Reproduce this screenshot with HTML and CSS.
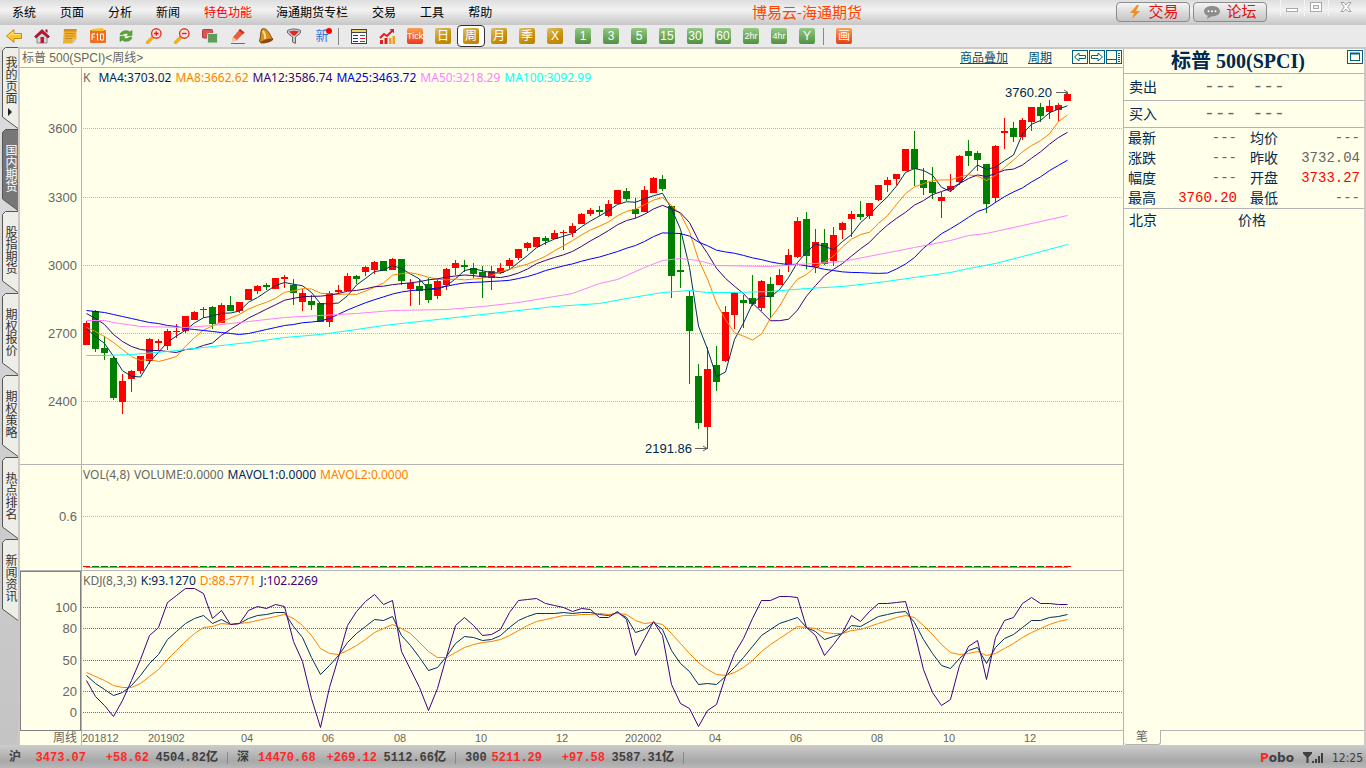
FILE: index.html
```html
<!DOCTYPE html>
<html lang="zh-CN">
<head>
<meta charset="utf-8">
<title>博易云-海通期货</title>
<link rel="stylesheet" href="styles.css">
</head>
<body>
<header class="titlebar">
  <nav class="menu">
    <button>系统</button><button>页面</button><button>分析</button><button>新闻</button><button class="hot">特色功能</button><button>海通期货专栏</button><button>交易</button><button>工具</button><button>帮助</button>
  </nav>
  <h1 class="app-title">博易云-海通期货</h1>
  <div class="actions">
    <button class="pill"><svg width="16" height="16" viewBox="0 0 16 16"><path d="M10 1L3 9h4L5 15l8-8H9l3-6z" fill="#f09020"/></svg>交易</button>
    <button class="pill"><svg width="18" height="16" viewBox="0 0 18 16"><path d="M9 2c4.500 0 8 2.200 8 5.300s-3.500 5.200-8 5.200l-1 0-4 2.500.8-3.200C2.500 11 1 9.300 1 7.300 1 4.200 4.500 2 9 2z" fill="#8c8c8c"/><g fill="#fff"><circle cx="5.500" cy="7.300" r="1"/><circle cx="9" cy="7.300" r="1"/><circle cx="12.500" cy="7.300" r="1"/></g></svg>论坛</button>
  </div>
  <div class="window-controls">
    <button aria-label="最小化"><svg width="14" height="14" viewBox="0 0 14 14"><rect x="1.500" y="8.500" width="11" height="3" fill="#fff" stroke="#a8a8a8"/></svg></button>
    <button aria-label="最大化"><svg width="14" height="14" viewBox="0 0 14 14"><rect x="1.500" y="2.500" width="11" height="9" fill="#fff" stroke="#a8a8a8"/><rect x="4.500" y="5.500" width="5" height="3" fill="#eee" stroke="#a8a8a8"/></svg></button>
    <button aria-label="关闭"><svg width="14" height="14" viewBox="0 0 14 14"><path d="M2 2.500h3l2 2.500 2-2.500h3L8.700 7l3.300 4.500H9L7 9l-2 2.500H2L5.300 7z" fill="#fff" stroke="#a0a0a0"/></svg></button>
  </div>
</header>

<div class="toolbar" role="toolbar">
  <button aria-label="后退"><svg viewBox="0 0 16 16"><path d="M0.500 8L8 1.500v4h7.500v5H8v4z" fill="#fcc52c" stroke="#c98a10"/><path d="M2.500 8L7 4v2.500h7.500" fill="none" stroke="#ffe888"/></svg></button>
  <button aria-label="主页"><svg viewBox="0 0 16 16"><path d="M3 7.500L8 3l5 4.500V15H3z" fill="#d8d8dc" stroke="#888"/><path d="M0.500 8.500L8 1.500l7.500 7-1.500 1.500L8 5l-6 5z" fill="#c8102a" stroke="#7c0818" stroke-width=".6"/><path d="M11.500 1.500h2v3.500l-2-1.500z" fill="#a01020"/><rect x="6.500" y="9" width="3.500" height="6" fill="#c0182c"/></svg></button>
  <button aria-label="便笺"><svg viewBox="0 0 16 16"><path d="M2 1h12.500v10l-4 4.500H1z" fill="#eeb030"/><path d="M2 1h12.500v2.500H1.800z" fill="#d49018"/><path d="M3 5.500h10M3 8h10M3 10.500h7" stroke="#c88c28"/><path d="M14.500 11l-4 4.500V11z" fill="#c8c8c0"/></svg></button>
  <button aria-label="F10资料"><svg viewBox="0 0 16 16"><rect x="0" y="2" width="16" height="13" rx="1" fill="#f07020"/><path d="M2 1l11-1 1 3H2z" fill="#f8c020"/><path d="M2 12V6h3M2 9h2.500M7.500 5.500V12.500M6.500 6.500h1M10.500 6h3v6h-3z" stroke="#fff" fill="none"/></svg></button>
  <button aria-label="刷新"><svg viewBox="0 0 16 16"><path d="M2 6.500C3 2.500 9 1.500 12 4l2-1.500V7.500H9L10.500 6C9 4.800 6 4.800 4.500 7z" fill="#58a830" stroke="#357c18" stroke-width=".5"/><path d="M14 9.500c-1 4-7 5-10 2.500L2 13.500V8.500h5L5.500 10c1.500 1.200 4.500 1.200 6-1z" fill="#58a830" stroke="#357c18" stroke-width=".5"/></svg></button>
  <button aria-label="放大"><svg viewBox="0 0 16 16"><path d="M1.500 14.500L7 9" stroke="#f0b018" stroke-width="3.500" stroke-linecap="round"/><circle cx="10.300" cy="5.500" r="4.700" fill="#fbe4e0" stroke="#e03828" stroke-width="1.400"/><path d="M8 5.500h4.600M10.300 3.200v4.600" stroke="#e02020" stroke-width="1.400"/></svg></button>
  <button aria-label="缩小"><svg viewBox="0 0 16 16"><path d="M1.500 14.500L7 9" stroke="#f0b018" stroke-width="3.500" stroke-linecap="round"/><circle cx="10.300" cy="5.500" r="4.700" fill="#fbe4e0" stroke="#e03828" stroke-width="1.400"/><path d="M8 5.500h4.600" stroke="#e02020" stroke-width="1.400"/></svg></button>
  <button aria-label="叠加"><svg viewBox="0 0 16 16"><rect x="0.500" y="1.500" width="10" height="8.500" rx="1" fill="#d85858" stroke="#b83838"/><rect x="5.500" y="5.500" width="10" height="9.500" rx="1" fill="#5c9c5c" stroke="#d8e8d8"/></svg></button>
  <button aria-label="画笔"><svg viewBox="0 0 16 16"><path d="M3 9l7-8 4.500 3.500L7 12l-5 1.500z" fill="#ee5a3c"/><path d="M10 1l4.500 3.500-1.500 1.500-4.500-3.500z" fill="#c83020"/><path d="M3 9l4 3-5.500 2z" fill="#f4cc90"/><path d="M1 15.500h14" stroke="#e03c2c"/></svg></button>
  <button aria-label="预警"><svg viewBox="0 0 16 16"><path d="M4 1c4-1.500 7 3 9.500 8.500l1.500 1.500-12 4-1.500-2C3 9 2 4 4 1z" fill="#d89020" stroke="#7c4808"/><path d="M4.500 3c2 1 3 5 2.500 8" fill="none" stroke="#fbe080" stroke-width="2"/><ellipse cx="9" cy="13" rx="6.500" ry="1.800" transform="rotate(-16 9 13)" fill="#8c4810"/></svg></button>
  <button aria-label="筛选"><svg viewBox="0 0 16 16"><path d="M1.500 2.500C5 .5 11 .5 14.500 2.500V5L9.500 9v6.500L6.500 14V9L1.500 5z" fill="#c8c8c8" stroke="#666"/><path d="M3 3.500c3-1 7-1 10 0L9 7.500H7z" fill="#e02828"/></svg></button>
  <button class="new" aria-label="新功能">新<i></i></button>
  <span class="sep"></span>
  <button aria-label="报价"><svg viewBox="0 0 16 16"><rect x=".5" y="1.500" width="15" height="14" fill="#fff" stroke="#444"/><path d="M1 3h14" stroke="#f0d060" stroke-width="2"/><path d="M0 4.500h16" stroke="#444"/><path d="M2 7.500h5M2 10.500h5M2 13.500h5" stroke="#183878"/><path d="M9 7.500h5M9 13.500h5" stroke="#188038"/><path d="M9 10.500h5" stroke="#d02020"/></svg></button>
  <button aria-label="走势"><svg viewBox="0 0 16 16"><path d="M1 10l4-4 3 2 6-6" fill="none" stroke="#e02020" stroke-width="2"/><path d="M10.500 1H15v4.500z" fill="#e02020"/><path d="M1 12h3v4H1zM5.500 10h3v6h-3z" fill="#d82418"/><path d="M10 10h2.500v6H10zM13.500 8H16v8h-2.500z" fill="#f0a020"/></svg></button>
  <button><span class="tile red tick">Tick</span></button>
  <button><span class="tile gold">日</span></button>
  <button class="active"><span class="tile gold">周</span></button>
  <button><span class="tile gold">月</span></button>
  <button><span class="tile gold">季</span></button>
  <button><span class="tile gold">X</span></button>
  <button><span class="tile green">1</span></button>
  <button><span class="tile green">3</span></button>
  <button><span class="tile green">5</span></button>
  <button><span class="tile green">15</span></button>
  <button><span class="tile green">30</span></button>
  <button><span class="tile green">60</span></button>
  <button><span class="tile green tick">2hr</span></button>
  <button><span class="tile green tick">4hr</span></button>
  <button><span class="tile green">Y</span></button>
  <span class="sep"></span>
  <button><span class="tile red">画</span></button>
</div>

<div class="workspace">
  <nav class="rail">
    <button class="tab"><svg viewBox="0 0 16 82"><path d="M16 .5H3.500L.5 3.500V70L16 81.500"/></svg><span>我的页面</span><i class="arrow"></i></button>
    <button class="tab on"><svg viewBox="0 0 16 82"><path d="M16 .5H3.500L.5 3.500V70L16 81.500"/></svg><span>国内期货</span></button>
    <button class="tab"><svg viewBox="0 0 16 82"><path d="M16 .5H3.500L.5 3.500V70L16 81.500"/></svg><span>股指期货</span></button>
    <button class="tab"><svg viewBox="0 0 16 82"><path d="M16 .5H3.500L.5 3.500V70L16 81.500"/></svg><span>期权报价</span></button>
    <button class="tab"><svg viewBox="0 0 16 82"><path d="M16 .5H3.500L.5 3.500V70L16 81.500"/></svg><span>期权策略</span></button>
    <button class="tab"><svg viewBox="0 0 16 82"><path d="M16 .5H3.500L.5 3.500V70L16 81.500"/></svg><span>热点排名</span></button>
    <button class="tab"><svg viewBox="0 0 16 82"><path d="M16 .5H3.500L.5 3.500V70L16 81.500"/></svg><span>新闻资讯</span></button>
  </nav>

  <main class="frame">
    <section class="chart">
      <div class="chart-head">
        <span>标普 500(SPCI)&lt;周线&gt;</span>
        <div class="chart-links">
          <a href="#">商品叠加</a><a href="#">周期</a>
          <div class="nav-icons">
            <button aria-label="上一个"><svg viewBox="0 0 16 14"><rect x=".5" y=".5" width="15" height="13"/><path d="M2.500 7L7 3v2.500h6.500v3H7V11z"/></svg></button>
            <button aria-label="下一个"><svg viewBox="0 0 16 14"><rect x=".5" y=".5" width="15" height="13"/><path d="M13.500 7L9 3v2.500H2.500v3H9V11z"/></svg></button>
            <button aria-label="分栏"><svg viewBox="0 0 16 14"><rect x=".5" y=".5" width="15" height="13"/><path d="M1 9.500h9.500M10.500 1v12M12 3.500h2M12 5.500h2M12 7.500h2M12 9.500h2M12 11.500h2"/></svg></button>
          </div>
        </div>
      </div>

      <div class="axis"><svg><g transform="translate(-20 -68)"><text x="77" y="133">3600</text><text x="77" y="202">3300</text><text x="77" y="270">3000</text><text x="77" y="338">2700</text><text x="77" y="406">2400</text></g></svg></div>
      <div class="panel">
        <svg><g id="price" transform="translate(-82 -68)"></g></svg>
        <p class="legend"><span class="k">K</span><span class="navy">MA4:3703.02</span><span class="orange">MA8:3662.62</span><span class="indigo">MA12:3586.74</span><span class="blue">MA25:3463.72</span><span class="pink">MA50:3218.29</span><span class="cyan">MA100:3092.99</span></p>
      </div>

      <div class="axis"><svg><g transform="translate(-20 -465)"><text x="77" y="521">0.6</text></g></svg></div>
      <div class="panel">
        <svg><g id="volume" transform="translate(-82 -465)"></g></svg>
        <p class="legend"><span>VOL(4,8)</span><span>VOLUME:0.0000</span><span class="navy">MAVOL1:0.0000</span><span class="orange">MAVOL2:0.0000</span></p>
      </div>

      <div class="axis selected"><svg><g transform="translate(-21 -572)"><text x="77" y="612">100</text><text x="77" y="633">80</text><text x="77" y="665">50</text><text x="77" y="696">20</text><text x="77" y="717">0</text></g></svg></div>
      <div class="panel">
        <svg><g id="kdj" transform="translate(-82 -571)"></g></svg>
        <p class="legend"><span>KDJ(8,3,3)</span><span class="navy">K:93.1270</span><span class="orange">D:88.5771</span><span class="indigo">J:102.2269</span></p>
      </div>

      <div class="axis period">周线</div>
      <div class="dates"><svg><g id="dates" transform="translate(-82 -731)"></g></svg></div>
    </section>

    <aside class="quote">
      <h2>标普 500(SPCI)<button aria-label="最大化面板"><svg viewBox="0 0 16 14"><rect x=".5" y=".5" width="15" height="13"/><rect x="3.500" y="3.500" width="9" height="7"/><path d="M3 3.500h10" stroke-width="2"/></svg></button></h2>
      <dl class="bidask"><dt>卖出</dt><dd>---</dd><dd>---</dd></dl>
      <dl class="bidask"><dt>买入</dt><dd>---</dd><dd>---</dd></dl>
      <table class="stats">
        <tr><th>最新</th><td>---</td><th>均价</th><td>---</td></tr>
        <tr><th>涨跌</th><td>---</td><th>昨收</th><td>3732.04</td></tr>
        <tr><th>幅度</th><td>---</td><th>开盘</th><td class="up">3733.27</td></tr>
        <tr><th>最高</th><td class="up">3760.20</td><th>最低</th><td>---</td></tr>
      </table>
      <div class="ticks"><span>北京</span><span>价格</span></div>
      <div class="quote-tabs"><button>笔</button><span></span></div>
    </aside>
  </main>
</div>

<footer class="status">
  <div class="index"><span>沪</span><b class="up">3473.07</b><b class="up">+58.62</b><b>4504.82亿</b></div>
  <div class="index"><span>深</span><b class="up">14470.68</b><b class="up">+269.12</b><b>5112.66亿</b></div>
  <div class="index"><span>300</span><b class="up">5211.29</b><b class="up">+97.58</b><b>3587.31亿</b></div>
  <span class="brand"><em>P</em>obo</span>
  <svg class="signal" viewBox="0 0 22 14"><path d="M1 2h9M2 2l3.500 4L9 2M5.500 2v10" fill="none" stroke="#404040" stroke-width="2"/><path d="M10 10h2v2h-2zM13 8h2v4h-2zM16 5h2v7h-2zM19 2h2v10h-2z" fill="#404040"/></svg>
  <time>12:25</time>
</footer>
<script src="chart.js"></script>
</body>
</html>
```

FILE: chart.js
```js
const NS = 'http://www.w3.org/2000/svg';
const FIRST_X = 86;
const STEP = 9;

// One entry per week: direction, high, body top, body bottom, low.
const candles = `
r 321 323 345 345|g 310 311 349 352|g 336 348 353 360|g 356 358 398 400|r 374 381 402 414
r 370 371 379 392|r 356 356 371 374|r 338 339 361 364|r 339 341 343 350|r 329 331 346 350
r 324 331 332 338|r 316 316 331 333|r 311 312 320 320|g 307 309 310 318|g 306 307 324 329
r 303 305 323 323|g 296 305 311 311|r 302 302 311 313|r 289 289 300 300|r 285 286 291 294
g 283 285 287 290|r 278 278 289 289|r 275 277 279 288|g 279 285 293 305|r 289 293 302 311
g 295 301 305 310|g 303 303 322 322|r 291 293 322 327|r 285 290 292 294|r 273 276 291 291
g 275 276 279 284|r 266 267 272 276|r 261 262 270 274|g 261 261 271 271|r 258 259 270 270
g 259 259 281 285|r 279 283 289 306|g 279 286 291 305|g 278 284 300 303|r 279 281 296 299
r 268 269 285 290|r 260 263 268 275|g 260 265 267 272|g 263 268 274 278|g 266 272 277 298
r 266 271 278 290|r 263 268 273 274|r 258 260 266 270|r 249 249 258 260|r 242 243 248 251
r 237 237 247 247|g 236 238 241 245|r 230 233 239 239|r 230 232 233 250|r 223 226 233 237
r 213 214 224 224|r 208 210 214 216|g 206 210 212 216|r 200 204 216 217|r 190 190 204 204
g 188 191 199 201|g 198 209 214 218|r 186 190 212 212|r 177 178 193 193|g 175 179 189 191
g 206 206 276 298|g 233 270 272 288|g 291 296 331 384|g 364 376 423 429|r 347 369 427 449
g 346 365 382 391|r 306 312 361 362|r 292 293 315 329|g 295 300 303 328|g 275 298 304 306
r 280 281 308 311|g 277 284 297 318|r 269 275 285 285|r 249 255 265 272|r 217 221 257 258
g 212 219 256 269|r 229 242 267 273|g 229 243 264 265|r 227 235 261 266|r 222 223 230 239
r 211 214 219 237|g 201 214 217 220|r 203 203 216 219|r 185 185 200 201|r 177 180 185 192
r 174 174 179 185|r 149 149 171 171|g 131 149 169 186|g 168 180 188 195|g 167 182 193 199
r 192 197 201 218|r 174 186 190 192|r 155 156 182 185|g 140 151 156 166|g 151 153 160 171
g 164 164 204 213|r 145 146 198 203|r 118 131 133 149|g 122 128 137 142|r 118 120 137 140
r 107 107 122 131|g 103 107 116 122|r 100 106 112 119|r 103 105 110 121|r 92 94 101 101
`.trim().split(/[|\n]/).map(row => {
  const [dir, ...v] = row.split(' ');
  const [high, top, bottom, low] = v.map(Number);
  return { color: dir === 'r' ? '#ff0000' : '#008000', high, top, bottom, low, close: dir === 'r' ? top : bottom };
});

const J = [680,696,705,716,700,680,659,635,627,602,595,588,588,593,618,610,624,623,610,606,608,604,606,641,661,698,727,687,657,625,611,601,594,604,600,651,669,687,710,688,656,625,617,625,635,634,629,612,600,599,598,603,605,607,611,608,609,617,617,611,619,655,638,621,635,684,703,708,726,710,704,676,653,638,618,600,600,596,596,597,627,635,655,644,632,615,621,611,603,603,602,601,632,669,692,705,699,665,646,640,679,637,620,617,603,597,603,603,604,604];
const K = [675,683,689,695,692,685,675,663,654,639,631,623,618,615,623,619,624,623,618,615,614,612,612,626,637,657,674,665,655,642,633,626,619,620,616,635,645,657,670,667,656,643,636,637,640,639,635,627,620,616,613,613,613,612,613,612,612,614,615,612,617,632,629,622,629,650,663,671,684,683,684,676,667,657,646,635,629,623,620,617,627,631,639,636,633,625,626,621,616,614,612,611,622,639,653,665,668,658,650,647,663,647,638,634,627,620,620,617,616,614];
const D = [672,676,680,685,687,687,683,676,669,659,650,641,633,627,626,623,624,623,622,620,618,616,614,618,625,635,648,653,654,650,645,639,632,628,624,628,633,642,651,657,657,652,647,644,642,641,639,635,630,625,621,619,617,615,615,614,614,613,614,613,614,620,623,622,624,633,643,653,662,669,674,675,672,667,660,651,644,638,632,626,627,628,632,633,633,630,629,626,623,620,617,615,617,625,634,644,652,654,653,651,655,653,648,643,637,632,628,624,621,619];

// Long averages, given as [week, y] anchors.
const ma50 = [[0,320],[2,320],[3,322],[6,326],[11,327],[14,325],[18,321],[22,317],[26,315],[30,313],[34,310],[40,309],[44,306],[48,302],[52,294],[54,291],[57,283],[59,279],[62,270],[64,265],[66,258],[68,260],[70,265],[76,266],[79,264],[81,263],[84,261],[88,254],[92,247],[96,240],[98,235],[100,233],[104,225],[109,215]];
ma50.splice(14, 7, [52, 296], [54, 293], [57, 283], [59, 279], [62, 267], [64, 260], [66, 258]);
const ma100 = [[0,355],[2,355],[5,354],[9,351],[13,347],[18,342],[22,337],[26,334],[30,329],[33,325],[38,320],[46,312],[52,306],[57,303],[60,298],[62,295],[64,292],[67,290],[69,292],[72,292],[76,291],[80,288],[84,286],[88,282],[92,277],[96,272],[98,268],[101,263],[104,256],[109,244]];

// Values before the averaging window is full.
const seed4 = [328,336,343];
const seed8 = [327,331,336,342,349,356,360];
const seed12 = [313,318,324,334,341,346,349,350,350,351,352];
const seed25 = [310,311,312,314,316,318,320,322,323,325,326,328,329,330,331,332,333,334,333,331,329,327,325,324];

function add(parent, tag, attrs, text) {
  const node = document.createElementNS(NS, tag);
  for (const key in attrs) node.setAttribute(key, attrs[key]);
  if (text) node.textContent = text;
  parent.appendChild(node);
}

function average(n, seed) {
  return candles.map((c, i) => {
    if (i < seed.length) return seed[i];
    let sum = 0;
    for (let j = i - n + 1; j <= i; j++) sum += candles[j].close;
    return sum / n;
  });
}

const x = i => FIRST_X + STEP * i;

function line(parent, points, color) {
  add(parent, 'polyline', { points: points.map(([i, y]) => `${x(i) + 0.5},${y + 0.5}`).join(' '), stroke: color, class: 'series' });
}
const series = values => values.map((y, i) => [i, y]);

// Grid lines run past any window width; the svg clips them.
function grid(parent, ys, cls) {
  ys.forEach(y => add(parent, 'line', { x1: 83, x2: 4000, y1: y + 0.5, y2: y + 0.5, class: cls }));
}

function callout(parent, label, tx, y, end) {
  add(parent, 'text', { x: tx, y: y + 5, class: 'callout' }, label);
  add(parent, 'path', { d: `M${end - 12} ${y + 0.5}H${end}M${end - 4} ${y - 2}L${end} ${y + 0.5}L${end - 4} ${y + 3}`, class: 'pointer' });
}

const price = document.getElementById('price');
grid(price, [128, 197, 265, 333, 401], 'grid');
candles.forEach((c, i) => {
  add(price, 'rect', { x: x(i), y: c.high, width: 1, height: c.low - c.high, fill: c.color });
  add(price, 'rect', { x: x(i) - 3, y: c.top, width: 7, height: c.bottom - c.top, fill: c.color });
});
line(price, series(average(4, seed4)), '#003060');
line(price, series(average(8, seed8)), '#ff8000');
line(price, series(average(12, seed12)), '#400080');
line(price, series(average(25, seed25)), '#0000ff');
line(price, ma50, '#ff80ff');
line(price, ma100, '#00ffff');
callout(price, '3760.20', 1005, 92, 1068);
callout(price, '2191.86', 645, 448, 707);

const volume = document.getElementById('volume');
grid(volume, [516], 'grid');
candles.forEach((c, i) => add(volume, 'rect', { x: x(i) - 3, y: 566, width: 7, height: 1, fill: c.color }));
add(volume, 'rect', { x: 86, y: 567, width: 982, height: 1, fill: '#ff8000' });

const kdj = document.getElementById('kdj');
grid(kdj, [607, 628, 660, 691, 712], 'grid dark');
line(kdj, series(K), '#003060');
line(kdj, series(D), '#ff8000');
line(kdj, series(J), '#400080');

const dates = document.getElementById('dates');
[['201812', 82], ['201902', 148], ['04', 241], ['06', 322], ['08', 394], ['10', 475], ['12', 556], ['202002', 625], ['04', 709], ['06', 790], ['08', 871], ['10', 943], ['12', 1024]]
  .forEach(([label, left]) => add(dates, 'text', { x: left, y: 742 }, label));
```

FILE: styles.css
```css
* { box-sizing: border-box; }
body {
  margin: 0;
  min-height: 100vh;
  display: flex;
  flex-direction: column;
  background: #c8c8c8;
  font: 12px/16px "Liberation Sans", "Noto Sans CJK SC", sans-serif;
  color: #666;
}
button { padding: 0; border: 0; background: none; font: inherit; color: inherit; }
h1, h2, p, dl, dd { margin: 0; font-weight: normal; }
svg { display: block; overflow: hidden; }

.titlebar {
  display: flex;
  align-items: stretch;
  height: 25px;
  background: linear-gradient(#dedede, #f2f2f2 40%, #c6c6c6);
}
.menu { display: flex; gap: 24px; padding-left: 12px; color: #000; }
.menu .hot { color: #ff0000; }
.app-title { margin: 0 auto; padding-left: 6px; font-size: 15px; line-height: 25px; color: #ff4500; }
.actions { display: flex; gap: 3px; padding: 2px 0 3px; }
.pill {
  display: flex;
  align-items: center;
  justify-content: center;
  gap: 5px;
  width: 74px;
  border: 1px solid #8c8c8c;
  border-radius: 4px;
  background: linear-gradient(#f4f4f4, #c4c4c4);
  font-size: 15px;
  line-height: 16px;
  color: #e01010;
}
.window-controls { display: flex; margin-left: 13px; padding-right: 3px; }
.window-controls button { display: flex; justify-content: center; width: 24px; height: 16px; border-left: 1px solid #f4f4f4; }
.window-controls button:last-child { width: 35px; }

.toolbar { display: flex; align-items: center; height: 22px; background: #eaeaea; }
.toolbar button { display: flex; align-items: center; justify-content: center; flex: none; width: 28px; height: 22px; }
.toolbar button svg { width: 16px; height: 16px; }
.toolbar .sep { flex: none; width: 7px; height: 17px; margin-left: 2px; border-left: 1px solid #888; }
.toolbar .active { border: 1px solid #333; border-radius: 4px; background: #fff; }
.toolbar .new { position: relative; font-size: 13px; color: #3078d8; }
.new i { position: absolute; right: 4px; top: 3px; width: 6px; height: 6px; border-radius: 50%; background: #ff0000; }
.tile {
  width: 16px;
  height: 16px;
  border-radius: 2px;
  font-size: 12px;
  line-height: 16px;
  text-align: center;
  color: #fff;
}
.gold { background: linear-gradient(150deg, #dcc068, #c89008 60%, #b88000); }
.green { background: linear-gradient(#94c884, #509040); }
.red { background: linear-gradient(#f8a050, #e83c18); }
.tick { font-size: 9px; }

.workspace { flex: 1; display: flex; }
.rail { flex: none; width: 18px; padding-left: 2px; background: linear-gradient(#dedede, #c4c4c4); }
.tab {
  position: relative;
  display: flex;
  flex-direction: column;
  align-items: center;
  justify-content: center;
  width: 16px;
  height: 82px;
  padding: 0 0 4px;
  color: #333;
}
.tab svg { position: absolute; inset: 0; width: 16px; height: 82px; }
.tab path { fill: #eeeee8; stroke: #555; }
.tab span { position: relative; writing-mode: vertical-rl; line-height: 12px; font-size: 12px; }
.tab.on { color: #fff; }
.tab.on path { fill: #777; }
.arrow { position: relative; margin-top: 4px; border-left: 4px solid #222; border-top: 4px solid transparent; border-bottom: 4px solid transparent; }

.frame {
  flex: 1;
  min-width: 0;
  display: flex;
  border: solid #d0c6c6;
  border-width: 2px 2px 0;
  background: #ffffea;
}
.chart {
  flex: 1;
  min-width: 0;
  display: grid;
  grid-template-columns: 62px 1fr;
  grid-template-rows: 19px 1fr 106px 160px 14px;
}
.chart-head {
  grid-column: 1 / 3;
  display: flex;
  justify-content: space-between;
  padding: 1px 1px 0 2px;
  border-bottom: 1px solid #b4b4b4;
}
.chart-links { display: flex; gap: 20px; color: #005080; }
.chart-links a { color: #005080; }
.nav-icons { display: flex; gap: 1px; }
.nav-icons button, .nav-icons svg { width: 16px; height: 14px; }
.nav-icons svg, .quote h2 svg { fill: none; stroke: #006088; }

.axis { border-right: 1px solid #b4b4b4; border-bottom: 1px solid #b4b4b4; }
.axis svg { width: 61px; height: 100%; }
.axis text { font-size: 13px; text-anchor: end; fill: #666; }
.axis.selected { border: 1px solid #808080; border-right-color: #b4b4b4; box-shadow: inset -1px 0 #808080; }
.axis.selected svg { width: 58px; }
.axis.period { border-bottom: 0; padding-right: 4px; text-align: right; line-height: 14px; }
.panel { position: relative; border-bottom: 1px solid #b4b4b4; min-width: 0; }
.panel > svg { position: absolute; inset: 0; width: 100%; height: 100%; }
.legend {
  position: relative;
  display: flex;
  gap: 4px;
  padding: 2px 1px;
  font: 12px/16px "Noto Sans", sans-serif;
}
.legend .k { margin-right: 4px; }
.navy { color: #002860; }
.orange { color: #ff8000; }
.indigo { color: #400080; }
.blue { color: #0000e0; }
.pink { color: #ff80ff; }
.cyan { color: #00ffff; }
.dates svg { width: 100%; height: 14px; }
.dates text { font-size: 11px; fill: #666; }
.series { fill: none; stroke-width: 1; }
.grid { stroke: #b8b8b0; stroke-dasharray: 1 1; shape-rendering: crispEdges; }
.grid.dark { stroke: #707070; }
.callout { font-size: 13px; fill: #002850; }
.pointer { fill: none; stroke: #606060; }

.quote {
  flex: none;
  display: flex;
  flex-direction: column;
  width: 241px;
  border-left: 1px solid #b4b4b4;
  font-size: 14px;
  color: #002850;
}
.quote h2 {
  position: relative;
  height: 25px;
  padding-right: 12px;
  border-bottom: 1px solid #b4b4b4;
  font: bold 20px/24px "Liberation Serif", "Noto Sans CJK SC", serif;
  text-align: center;
}
.quote h2 button { position: absolute; right: 1px; top: 1px; }
.quote h2 svg { width: 16px; height: 14px; }
.bidask { display: flex; gap: 16px; height: 27px; padding-left: 5px; border-bottom: 1px solid #b4b4b4; line-height: 26px; }
.bidask dt { width: 59px; }
.bidask dd { font: 18px/26px "Liberation Mono", monospace; color: #666; }
.stats { border-spacing: 0; width: 100%; border-bottom: 1px solid #b4b4b4; table-layout: fixed; }
.stats th, .stats td { padding: 0 0 0 4px; height: 20px; line-height: 20px; text-align: left; font-weight: normal; }
.stats th { width: 44px; }
.stats td { padding: 0 4px 0 0; text-align: right; font-family: "Liberation Mono", monospace; color: #666; }
.stats td:nth-child(2) { width: 73px; }
.stats th:nth-child(3) { padding-left: 9px; }
.stats td.up { color: #ff0000; }
.ticks { flex: 1; display: grid; grid-template-columns: 109px 1fr; padding: 2px 5px; line-height: 18px; }
.quote-tabs { display: flex; height: 15px; font-size: 12px; color: #666; }
.quote-tabs button { width: 37px; line-height: 14px; border: solid #b4b4b4; border-width: 0 1px 1px 0; border-radius: 0 0 3px 3px; }
.quote-tabs span { flex: 1; border-top: 1px solid #b4b4b4; }

.status {
  display: flex;
  align-items: center;
  height: 23px;
  padding: 3px 3px 0 9px;
  background: linear-gradient(#cccccc, #a8a8a8 70%, #b8b8b8);
  font: bold 12px/16px "Liberation Mono", "Noto Sans CJK SC", monospace;
  color: #404040;
}
.index { display: grid; grid-template-columns: 21px 56px 63px 69px 9px; margin-right: 9px; border-right: 1px solid #888; line-height: 12px; white-space: nowrap; }
.index b { text-align: right; }
.index .up { color: #ff2828; }
.brand { margin-left: auto; font: bold 12px/16px "DejaVu Sans", sans-serif; }
.brand em { font-style: normal; color: #ff2828; }
.signal { width: 22px; height: 14px; margin: 0 8px; }
.status time { font: 12px/16px "DejaVu Sans Condensed", "DejaVu Sans", sans-serif; }
```
